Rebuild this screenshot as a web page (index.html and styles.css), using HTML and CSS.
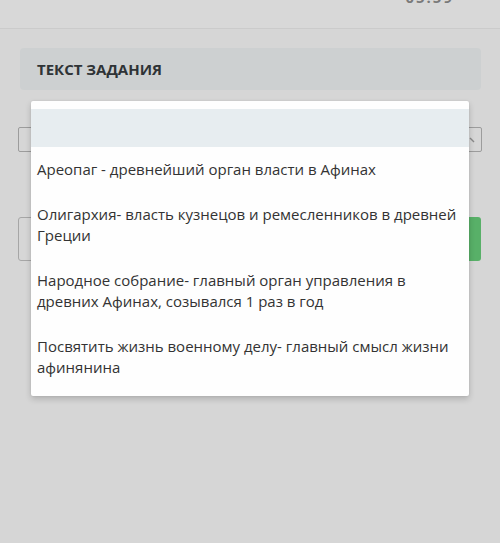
FILE: index.html
```html
<!DOCTYPE html>
<html lang="ru">
<head>
<meta charset="utf-8">
<link rel="stylesheet" href="styles.css">
</head>
<body>
<header class="topbar">
  <span class="timer">05:59</span>
</header>
<main class="content">
  <section class="task-card">
    <h2 class="task-title">ТЕКСТ ЗАДАНИЯ</h2>
  </section>
  <div class="select-row">
    <div class="select-box">
      <svg class="chev" width="8" height="8" viewBox="0 0 8 8"><path d="M1 2 L5 6" stroke="#8a8a8a" stroke-width="1.4" fill="none"/></svg>
    </div>
  </div>
  <div class="action-row">
    <div class="answer-box"></div>
    <div class="green-btn"></div>
  </div>
  <ul class="dropdown">
    <li class="opt opt-empty"></li>
    <li class="opt">Ареопаг - древнейший орган власти в Афинах</li>
    <li class="opt">Олигархия- власть кузнецов и ремесленников в древней Греции</li>
    <li class="opt">Народное собрание- главный орган управления в древних Афинах, созывался 1 раз в год</li>
    <li class="opt">Посвятить жизнь военному делу- главный смысл жизни афинянина</li>
  </ul>
</main>
</body>
</html>
```
FILE: styles.css
```css
* { box-sizing: border-box; }
html, body {
  margin: 0;
  padding: 0;
  background: #d6d6d6;
  font-family: "Open Sans", "Noto Sans", sans-serif;
  color: #333;
  width: 500px;
  height: 543px;
  overflow: hidden;
}
.topbar {
  height: 29px;
  border-bottom: 1px solid #cbcbcb;
  background: #d8d8d8;
  overflow: hidden;
  display: flex;
  justify-content: flex-end;
  align-items: flex-start;
  padding-right: 46px;
}
.timer {
  font-size: 15px;
  font-weight: 700;
  color: #7a7a7a;
  letter-spacing: 2px;
  margin-top: -12px;
  line-height: 18px;
}
.content {
  position: relative;
  padding: 19px 19px 0 20px;
}
.task-card {
  background: #cdd0d1;
  border-radius: 4px;
  height: 42px;
  display: flex;
  align-items: center;
  padding-left: 17px;
}
.task-title {
  margin: 0;
  font-size: 15px;
  font-weight: 700;
  color: #2f3336;
}
.select-row {
  margin-top: 37px;
  margin-left: -2px;
  margin-right: -1px;
}
.select-box {
  height: 25px;
  border: 1px solid #9c9c9c;
  border-radius: 2px;
  display: flex;
  justify-content: flex-end;
  align-items: center;
  padding-right: 4px;
}
.action-row {
  margin-top: 65px;
  margin-left: -2px;
  display: flex;
  justify-content: space-between;
  height: 44px;
}
.answer-box {
  width: 60px;
  border: 1px solid #a6a6a6;
  border-radius: 3px;
}
.green-btn {
  width: 80px;
  background: #58b068;
  border-radius: 3px;
}
.dropdown {
  position: absolute;
  left: 31px;
  top: 72px;
  width: 438px;
  margin: 0;
  padding: 8px 0 6px;
  list-style: none;
  background: #fefefe;
  border-radius: 2px;
  box-shadow: 0 3px 6px rgba(0,0,0,0.18), 0 0 2px rgba(0,0,0,0.08);
}
.opt {
  padding: 12px 8px 12px 6px;
  font-size: 15px;
  line-height: 21px;
  color: #333;
}
.opt-empty {
  height: 38px;
  background: #e7edf0;
  padding: 0;
}
```
